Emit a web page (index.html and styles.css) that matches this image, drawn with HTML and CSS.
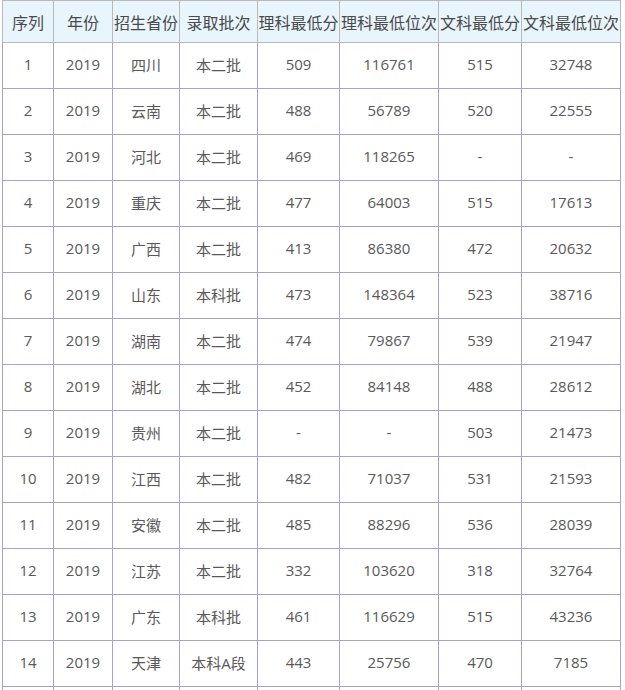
FILE: index.html
```html
<!DOCTYPE html>
<html lang="zh">
<head>
<meta charset="utf-8">
<title>录取分数</title>
<link rel="stylesheet" href="styles.css">
</head>
<body>
<table class="score-table">
  <colgroup>
    <col class="c1"><col class="c2"><col class="c3"><col class="c4">
    <col class="c5"><col class="c6"><col class="c7"><col class="c8">
  </colgroup>
  <thead>
    <tr>
      <th>序列</th><th>年份</th><th>招生省份</th><th>录取批次</th>
      <th>理科最低分</th><th>理科最低位次</th><th>文科最低分</th><th>文科最低位次</th>
    </tr>
  </thead>
  <tbody>
    <tr><td>1</td><td>2019</td><td>四川</td><td>本二批</td><td>509</td><td>116761</td><td>515</td><td>32748</td></tr>
    <tr><td>2</td><td>2019</td><td>云南</td><td>本二批</td><td>488</td><td>56789</td><td>520</td><td>22555</td></tr>
    <tr><td>3</td><td>2019</td><td>河北</td><td>本二批</td><td>469</td><td>118265</td><td>-</td><td>-</td></tr>
    <tr><td>4</td><td>2019</td><td>重庆</td><td>本二批</td><td>477</td><td>64003</td><td>515</td><td>17613</td></tr>
    <tr><td>5</td><td>2019</td><td>广西</td><td>本二批</td><td>413</td><td>86380</td><td>472</td><td>20632</td></tr>
    <tr><td>6</td><td>2019</td><td>山东</td><td>本科批</td><td>473</td><td>148364</td><td>523</td><td>38716</td></tr>
    <tr><td>7</td><td>2019</td><td>湖南</td><td>本二批</td><td>474</td><td>79867</td><td>539</td><td>21947</td></tr>
    <tr><td>8</td><td>2019</td><td>湖北</td><td>本二批</td><td>452</td><td>84148</td><td>488</td><td>28612</td></tr>
    <tr><td>9</td><td>2019</td><td>贵州</td><td>本二批</td><td>-</td><td>-</td><td>503</td><td>21473</td></tr>
    <tr><td>10</td><td>2019</td><td>江西</td><td>本二批</td><td>482</td><td>71037</td><td>531</td><td>21593</td></tr>
    <tr><td>11</td><td>2019</td><td>安徽</td><td>本二批</td><td>485</td><td>88296</td><td>536</td><td>28039</td></tr>
    <tr><td>12</td><td>2019</td><td>江苏</td><td>本二批</td><td>332</td><td>103620</td><td>318</td><td>32764</td></tr>
    <tr><td>13</td><td>2019</td><td>广东</td><td>本科批</td><td>461</td><td>116629</td><td>515</td><td>43236</td></tr>
    <tr><td>14</td><td>2019</td><td>天津</td><td>本科A段</td><td>443</td><td>25756</td><td>470</td><td>7185</td></tr>
    <tr class="tail"><td></td><td></td><td></td><td></td><td></td><td></td><td></td><td></td></tr>
  </tbody>
</table>
</body>
</html>
```

FILE: styles.css
```css
html, body {
  margin: 0;
  padding: 0;
  background: #ffffff;
}

.score-table {
  margin-left: 2px;
  width: 619px;
  table-layout: fixed;
  border-collapse: collapse;
  font-family: "Open Sans", "Noto Sans CJK SC", sans-serif;
  color: #595959;
}

.c1 { width: 51px; }
.c2 { width: 59px; }
.c3 { width: 67px; }
.c4 { width: 78px; }
.c5 { width: 82px; }
.c6 { width: 99px; }
.c7 { width: 83px; }
.c8 { width: 99px; }

.score-table th {
  height: 41px;
  padding: 0;
  background: #e8f5fd;
  border: 1px solid #b9b9b9;
  font-family: "Noto Sans CJK SC", sans-serif;
  font-weight: normal;
  font-size: 16px;
  color: #4a4a4a;
  text-align: center;
  white-space: nowrap;
  overflow: hidden;
}

.score-table td {
  height: 42px;
  padding: 0 0 3px;
  border: 1px solid #a99fd4;
  font-size: 15px;
  text-align: center;
  white-space: nowrap;
}
```
